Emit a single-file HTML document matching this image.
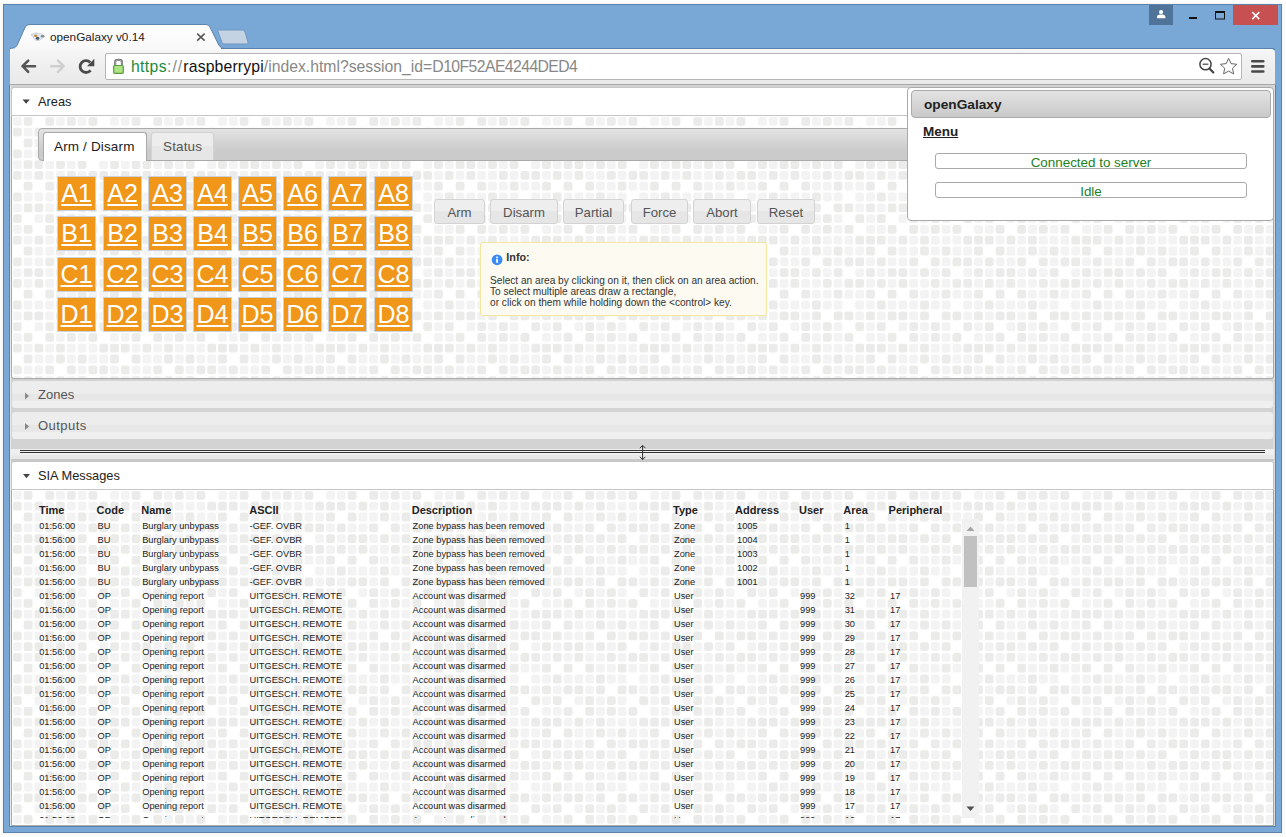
<!DOCTYPE html>
<html><head><meta charset="utf-8">
<style>
*{box-sizing:border-box}
html,body{margin:0;padding:0;width:1286px;height:837px;overflow:hidden;background:#fff;font-family:"Liberation Sans",sans-serif;position:relative}
.abs{position:absolute}
#win{position:absolute;left:3px;top:4px;width:1279px;height:829px;background:#79a7d6;border:1px solid #5b83ad;box-shadow:0 0 3px 1px rgba(60,50,40,0.07)}
#content{position:absolute;left:9px;top:85px;width:1267px;height:742px;background:#d3d3d3;border-left:1px solid #5b83ad;border-right:1px solid #5b83ad;border-bottom:1px solid #5b83ad}
.pat rect{width:8.8px;height:8.8px;rx:2.2px}
.pat .a{fill:#f3f3f3} .pat .b{fill:#ebebea}
.hdr{position:absolute;left:11px;width:1263px;border:1px solid #c5c5c5;border-radius:3px 3px 0 0;background:#fff;color:#222;font-size:12.8px}
.hdr .t{position:absolute;left:26px;top:6px}
.cnt{position:absolute;left:11px;width:1263px;border:1px solid #aaa;border-top:none;border-radius:0 0 3px 3px;background:#fff;overflow:hidden}
.cnt svg{position:absolute;left:0;top:0}
.ab{position:absolute;width:39px;height:35px;background:#f09618;border:1px solid #c9d3df;color:#fff;font-size:25px;text-align:center;line-height:33px;text-decoration:underline;text-decoration-thickness:2px;text-underline-offset:2px}
.btn{position:absolute;top:199px;height:25px;border:1px solid #d3d3d3;border-radius:3px;background:linear-gradient(#eeeeee 0,#eeeeee 50%,#e6e6e6 50%,#e6e6e6 100%);color:#555;font-size:13.2px;text-align:center;line-height:25px}
.th{position:absolute;top:0;font-size:11px;font-weight:bold;color:#222}
.td{position:absolute;font-size:9.25px;color:#222;white-space:nowrap;line-height:14px}
.coll{position:absolute;left:12px;width:1261px;height:27px;border-radius:3px;background:linear-gradient(#ededed 0,#ededed 47%,#e6e6e6 47%,#e8e8e8 73%,#efefef 73%);color:#555;font-size:13px}
</style></head><body>
<svg width="0" height="0" style="position:absolute"><defs><pattern id="pt" patternUnits="userSpaceOnUse" width="108" height="108" class="pat"><rect x="0.9" y="1" class="a"/><rect x="11.7" y="1" class="b"/><rect x="33.3" y="1" class="b"/><rect x="44.1" y="1" class="a"/><rect x="54.9" y="1" class="b"/><rect x="65.7" y="1" class="a"/><rect x="76.5" y="1" class="b"/><rect x="98.1" y="1" class="a"/><rect x="0.9" y="11.8" class="b"/><rect x="11.7" y="11.8" class="a"/><rect x="22.5" y="11.8" class="b"/><rect x="33.3" y="11.8" class="a"/><rect x="44.1" y="11.8" class="b"/><rect x="54.9" y="11.8" class="a"/><rect x="65.7" y="11.8" class="a"/><rect x="76.5" y="11.8" class="a"/><rect x="87.3" y="11.8" class="b"/><rect x="98.1" y="11.8" class="b"/><rect x="11.7" y="22.6" class="b"/><rect x="22.5" y="22.6" class="a"/><rect x="33.3" y="22.6" class="a"/><rect x="44.1" y="22.6" class="b"/><rect x="54.9" y="22.6" class="a"/><rect x="65.7" y="22.6" class="b"/><rect x="76.5" y="22.6" class="a"/><rect x="87.3" y="22.6" class="a"/><rect x="98.1" y="22.6" class="b"/><rect x="0.9" y="33.4" class="b"/><rect x="11.7" y="33.4" class="a"/><rect x="22.5" y="33.4" class="a"/><rect x="33.3" y="33.4" class="b"/><rect x="54.9" y="33.4" class="b"/><rect x="65.7" y="33.4" class="a"/><rect x="76.5" y="33.4" class="b"/><rect x="87.3" y="33.4" class="b"/><rect x="98.1" y="33.4" class="a"/><rect x="0.9" y="44.2" class="a"/><rect x="11.7" y="44.2" class="b"/><rect x="22.5" y="44.2" class="b"/><rect x="33.3" y="44.2" class="a"/><rect x="44.1" y="44.2" class="b"/><rect x="54.9" y="44.2" class="a"/><rect x="65.7" y="44.2" class="b"/><rect x="87.3" y="44.2" class="a"/><rect x="98.1" y="44.2" class="b"/><rect x="0.9" y="55" class="b"/><rect x="11.7" y="55" class="a"/><rect x="22.5" y="55" class="b"/><rect x="33.3" y="55" class="a"/><rect x="44.1" y="55" class="a"/><rect x="54.9" y="55" class="b"/><rect x="65.7" y="55" class="a"/><rect x="76.5" y="55" class="b"/><rect x="87.3" y="55" class="b"/><rect x="98.1" y="55" class="a"/><rect x="11.7" y="65.8" class="b"/><rect x="33.3" y="65.8" class="b"/><rect x="44.1" y="65.8" class="a"/><rect x="54.9" y="65.8" class="a"/><rect x="65.7" y="65.8" class="b"/><rect x="76.5" y="65.8" class="a"/><rect x="87.3" y="65.8" class="a"/><rect x="98.1" y="65.8" class="b"/><rect x="0.9" y="76.6" class="b"/><rect x="11.7" y="76.6" class="a"/><rect x="22.5" y="76.6" class="a"/><rect x="33.3" y="76.6" class="a"/><rect x="44.1" y="76.6" class="b"/><rect x="54.9" y="76.6" class="a"/><rect x="65.7" y="76.6" class="a"/><rect x="87.3" y="76.6" class="a"/><rect x="98.1" y="76.6" class="a"/><rect x="0.9" y="87.4" class="a"/><rect x="11.7" y="87.4" class="b"/><rect x="22.5" y="87.4" class="b"/><rect x="33.3" y="87.4" class="a"/><rect x="44.1" y="87.4" class="b"/><rect x="65.7" y="87.4" class="b"/><rect x="76.5" y="87.4" class="b"/><rect x="87.3" y="87.4" class="a"/><rect x="98.1" y="87.4" class="b"/><rect x="0.9" y="98.2" class="b"/><rect x="22.5" y="98.2" class="a"/><rect x="33.3" y="98.2" class="b"/><rect x="44.1" y="98.2" class="a"/><rect x="54.9" y="98.2" class="b"/><rect x="65.7" y="98.2" class="a"/><rect x="87.3" y="98.2" class="b"/><rect x="98.1" y="98.2" class="a"/></pattern></defs></svg>
<div id="win"></div>
<div class="abs" style="left:1149px;top:5px;width:24px;height:20px;background:#50739a"></div>
<div class="abs" style="left:1233px;top:5px;width:45px;height:20px;background:#c75050"></div>
<svg class="abs" style="left:0;top:0" width="300" height="60">
<defs><linearGradient id="tg" x1="0" y1="0" x2="0" y2="1"><stop offset="0" stop-color="#ffffff"/><stop offset="1" stop-color="#f8f8f8"/></linearGradient></defs>
<path d="M10,50 L10,48.5 Q15.5,48.5 17,45.5 L25.2,27 Q26.6,24.5 30,24.5 L206,24.5 Q208.8,24.5 210.2,27.5 L219,45.5 Q220.8,48.5 225,48.5 L225,50 Z" fill="url(#tg)" stroke="#5c84ad" stroke-width="1"/>
<path d="M218.5,30 L242.5,30 Q244,30 245,32 L248,42 Q248.5,44 246.5,44 L224,44 Q222.5,44 222,42.5 L218,31.5 Q217.7,30 218.5,30 Z" fill="#c3d3e3" stroke="#6f97c2" stroke-width="1"/>
</svg>
<div class="abs" style="left:50px;top:29.5px;font-size:11.75px;color:#222">openGalaxy v0.14</div>
<div class="abs" style="left:221px;top:48px;width:1054px;height:2px;background:#5c84ad;border-radius:0 5px 0 0"></div>
<div class="abs" style="left:10px;top:49px;width:1265px;height:36px;background:linear-gradient(#f8f8f8,#f4f4f4 10%,#e9e9e9);border-radius:0 4px 0 0;border-bottom:1px solid #a9a9a9"></div>
<div class="abs" style="left:105px;top:53px;width:1137px;height:27px;background:#fff;border:1px solid #b5b5b5;border-radius:2px"></div>
<div class="abs" style="left:131px;top:58px;font-size:15.75px;color:#888;white-space:nowrap"><span style="color:#1a8a40;letter-spacing:0.35px">https</span><span style="color:#888;letter-spacing:1.1px">://</span><span style="color:#111;letter-spacing:0.15px">raspberrypi</span><span>/index.html?session_id=</span><span style="letter-spacing:-0.57px">D10F52AE4244DED4</span></div>
<svg class="abs" style="left:0;top:0" width="1286" height="90">
<path d="M31,34.5 L36,32.8 L42,34.2 L44.5,36.2 L39.5,40.5 L35.5,40.2 Z" fill="#dde9f8" stroke="#b8bcc4" stroke-width="0.6"/>
<ellipse cx="35.7" cy="35.8" rx="1.6" ry="1.2" fill="#c98a20"/>
<ellipse cx="37.6" cy="38.3" rx="1.7" ry="1.5" fill="#4a5260"/>
<ellipse cx="42.6" cy="36.2" rx="1.8" ry="1.3" fill="#888"/>
<path d="M197.2,33.6 L204.6,40.6 M204.6,33.6 L197.2,40.6" stroke="#555" stroke-width="1.5"/>
<path d="M22.5,66.2 L35,66.2 M28.2,60.6 L22.6,66.2 L28.2,71.8" stroke="#555" stroke-width="2.6" fill="none" stroke-linecap="round" stroke-linejoin="round"/>
<path d="M51.3,66.2 L63.6,66.2 M58,60.6 L63.6,66.2 L58,71.8" stroke="#cfcfcf" stroke-width="2.6" fill="none" stroke-linecap="round" stroke-linejoin="round"/>
<path d="M90.6,70.3 A5.9,5.9 0 1 1 90.2,62.4" stroke="#4a4a4a" stroke-width="2.8" fill="none"/>
<path d="M94.3,58.8 L94.3,66.2 L87,66.2 Z" fill="#4a4a4a"/>
<path d="M115.2,65 L115.2,62 Q115.2,59.8 118.5,59.8 Q121.9,59.8 121.9,62 L121.9,65" stroke="#555" stroke-width="2" fill="none"/>
<path d="M115.2,65 L115.2,62 Q115.2,59.8 118.5,59.8 Q121.9,59.8 121.9,62 L121.9,65" stroke="#ddd" stroke-width="0.7" fill="none"/>
<rect x="113.7" y="65.5" width="9.6" height="7.8" rx="1" fill="#ace484" stroke="#5a9a44" stroke-width="1.2"/>
<circle cx="1205.5" cy="64.2" r="5.6" stroke="#444" stroke-width="1.5" fill="none"/>
<path d="M1202.6,64.2 L1208.4,64.2" stroke="#444" stroke-width="1.2"/>
<path d="M1209.5,68.5 L1213.3,72.4" stroke="#444" stroke-width="2.2" stroke-linecap="round"/>
<path d="M1228.6,58.3 L1231,63.6 L1236.8,64.3 L1232.5,68.2 L1233.6,73.9 L1228.6,71.1 L1223.6,73.9 L1224.7,68.2 L1220.4,64.3 L1226.2,63.6 Z" stroke="#666" stroke-width="1" fill="none" stroke-linejoin="round"/>
<path d="M1252.3,61.3 L1263.3,61.3 M1252.3,66.4 L1263.3,66.4 M1252.3,71.5 L1263.3,71.5" stroke="#4a4a4a" stroke-width="2.6" stroke-linecap="round"/>
<circle cx="1161.1" cy="12" r="2.1" fill="#fff"/>
<path d="M1157,18.3 L1157,16.6 Q1157,14.6 1159.5,14.4 L1162.7,14.4 Q1165.3,14.6 1165.3,16.6 L1165.3,18.3 Z" fill="#fff"/>
<rect x="1189" y="17" width="8" height="2" fill="#111"/>
<rect x="1215.5" y="11.5" width="9" height="7.5" stroke="#111" stroke-width="1" fill="none"/>
<rect x="1215" y="11" width="10" height="2" fill="#111"/>
<path d="M1252.3,12.1 L1259.3,19.1 M1259.3,12.1 L1252.3,19.1" stroke="#fff" stroke-width="1.5"/>
</svg>
<div id="content"></div>
<div class="abs" style="left:10px;top:85px;width:1px;height:741px;background:#e9e9e9"></div>
<div class="abs" style="left:1273px;top:85px;width:2px;height:741px;background:#dcdcdc"></div>
<div class="hdr" style="top:87px;height:29px"><div class="t" style="left:26px">Areas</div></div>
<div class="cnt" style="top:116px;height:263px"><svg width="1263" height="263"><rect width="1263" height="263" fill="url(#pt)"/></svg>
  <div class="abs" style="left:26px;top:12px;width:1241px;height:33px;border:1px solid #aaa;border-radius:4px;background:linear-gradient(#e3e3e3,#cbcbcb 70%,#cbcbcb)"></div>
  <div class="abs" style="left:31px;top:16px;width:104px;height:29px;border:1px solid #aaa;border-bottom:none;border-radius:3px 3px 0 0;background:#fff;color:#222;font-size:13.5px;letter-spacing:0.15px;padding:6px 0 0 10px">Arm / Disarm</div>
  <div class="abs" style="left:139px;top:16px;width:63px;height:28px;border:1px solid #d3d3d3;border-bottom:none;border-radius:3px 3px 0 0;background:linear-gradient(#ededed 0,#ededed 50%,#e6e6e6 50%);color:#555;font-size:13.5px;letter-spacing:0.15px;padding:6px 0 0 11px">Status</div>
</div>
<div class="abs" style="left:0;top:0;width:1286px;height:837px"><div class="ab" style="left:57px;top:176px">A1</div><div class="ab" style="left:103px;top:176px">A2</div><div class="ab" style="left:148px;top:176px">A3</div><div class="ab" style="left:193px;top:176px">A4</div><div class="ab" style="left:238px;top:176px">A5</div><div class="ab" style="left:283px;top:176px">A6</div><div class="ab" style="left:328px;top:176px">A7</div><div class="ab" style="left:374px;top:176px">A8</div><div class="ab" style="left:57px;top:216px">B1</div><div class="ab" style="left:103px;top:216px">B2</div><div class="ab" style="left:148px;top:216px">B3</div><div class="ab" style="left:193px;top:216px">B4</div><div class="ab" style="left:238px;top:216px">B5</div><div class="ab" style="left:283px;top:216px">B6</div><div class="ab" style="left:328px;top:216px">B7</div><div class="ab" style="left:374px;top:216px">B8</div><div class="ab" style="left:57px;top:257px">C1</div><div class="ab" style="left:103px;top:257px">C2</div><div class="ab" style="left:148px;top:257px">C3</div><div class="ab" style="left:193px;top:257px">C4</div><div class="ab" style="left:238px;top:257px">C5</div><div class="ab" style="left:283px;top:257px">C6</div><div class="ab" style="left:328px;top:257px">C7</div><div class="ab" style="left:374px;top:257px">C8</div><div class="ab" style="left:57px;top:297px">D1</div><div class="ab" style="left:103px;top:297px">D2</div><div class="ab" style="left:148px;top:297px">D3</div><div class="ab" style="left:193px;top:297px">D4</div><div class="ab" style="left:238px;top:297px">D5</div><div class="ab" style="left:283px;top:297px">D6</div><div class="ab" style="left:328px;top:297px">D7</div><div class="ab" style="left:374px;top:297px">D8</div><div class="btn" style="left:434px;width:51px">Arm</div><div class="btn" style="left:490px;width:68px">Disarm</div><div class="btn" style="left:563px;width:61px">Partial</div><div class="btn" style="left:631px;width:57px">Force</div><div class="btn" style="left:693px;width:58px">Abort</div><div class="btn" style="left:757px;width:58px">Reset</div></div>
<div class="abs" style="left:480px;top:242px;width:287px;height:74px;border:1px solid #f3e6a0;border-radius:3px;background:#fcfaf1;color:#333">
  <svg class="abs" style="left:0;top:0" width="30" height="30"><circle cx="16.1" cy="16.8" r="5.4" fill="#3b8bf5"/><rect x="15.2" y="13.6" width="1.8" height="1.6" fill="#fff"/><rect x="15.2" y="16" width="1.8" height="3.8" fill="#fff"/></svg>
  <div class="abs" style="left:25.3px;top:8px;font-size:10.8px;font-weight:bold">Info:</div>
  <div class="abs" style="left:9px;top:32px;font-size:10.15px;line-height:11px;white-space:nowrap">Select an area by clicking on it, then click on an area action.<br>To select multiple areas draw a rectangle,<br>or click on them while holding down the &lt;control&gt; key.</div>
</div>
<div class="coll" style="top:381px"><div class="abs" style="left:26px;top:6px">Zones</div></div>
<div class="coll" style="top:412px"><div class="abs" style="left:26px;top:6px;letter-spacing:0.45px">Outputs</div></div>
<div class="abs" style="left:11px;top:449px;width:1263px;height:12px;background:linear-gradient(#efefef 0,#efefef 50%,#e8e8e8 50%,#e8e8e8 83%,#c8c8c8 83%)"></div>
<div class="abs" style="left:20px;top:450px;width:1245px;height:3px;border-top:1px solid #333;border-bottom:1px solid #333"></div>
<div class="hdr" style="top:461px;height:29px"><div class="t">SIA Messages</div></div>
<div class="cnt" style="top:490px;height:336px;border-radius:0"><svg width="1263" height="336"><rect width="1263" height="336" fill="url(#pt)"/></svg></div>
<div class="abs" style="left:0;top:504px"><div class="th" style="left:39px">Time</div><div class="th" style="left:96.5px">Code</div><div class="th" style="left:141.3px">Name</div><div class="th" style="left:249.2px">ASCII</div><div class="th" style="left:411.7px">Description</div><div class="th" style="left:673px">Type</div><div class="th" style="left:735px">Address</div><div class="th" style="left:799px">User</div><div class="th" style="left:843.3px">Area</div><div class="th" style="left:888.6px">Peripheral</div></div>
<div class="abs" style="left:20px;top:519px;width:959px;height:299px;overflow:hidden"><div class="td" style="left:19.200000000000003px;top:0px">01:56:00</div><div class="td" style="left:77.5px;top:0px">BU</div><div class="td" style="left:122.19999999999999px;top:0px">Burglary unbypass</div><div class="td" style="left:229.6px;top:0px">-GEF. OVBR</div><div class="td" style="left:392.6px;top:0px">Zone bypass has been removed</div><div class="td" style="left:654px;top:0px">Zone</div><div class="td" style="left:717px;top:0px">1005</div><div class="td" style="left:824.7px;top:0px">1</div><div class="td" style="left:19.200000000000003px;top:14px">01:56:00</div><div class="td" style="left:77.5px;top:14px">BU</div><div class="td" style="left:122.19999999999999px;top:14px">Burglary unbypass</div><div class="td" style="left:229.6px;top:14px">-GEF. OVBR</div><div class="td" style="left:392.6px;top:14px">Zone bypass has been removed</div><div class="td" style="left:654px;top:14px">Zone</div><div class="td" style="left:717px;top:14px">1004</div><div class="td" style="left:824.7px;top:14px">1</div><div class="td" style="left:19.200000000000003px;top:28px">01:56:00</div><div class="td" style="left:77.5px;top:28px">BU</div><div class="td" style="left:122.19999999999999px;top:28px">Burglary unbypass</div><div class="td" style="left:229.6px;top:28px">-GEF. OVBR</div><div class="td" style="left:392.6px;top:28px">Zone bypass has been removed</div><div class="td" style="left:654px;top:28px">Zone</div><div class="td" style="left:717px;top:28px">1003</div><div class="td" style="left:824.7px;top:28px">1</div><div class="td" style="left:19.200000000000003px;top:42px">01:56:00</div><div class="td" style="left:77.5px;top:42px">BU</div><div class="td" style="left:122.19999999999999px;top:42px">Burglary unbypass</div><div class="td" style="left:229.6px;top:42px">-GEF. OVBR</div><div class="td" style="left:392.6px;top:42px">Zone bypass has been removed</div><div class="td" style="left:654px;top:42px">Zone</div><div class="td" style="left:717px;top:42px">1002</div><div class="td" style="left:824.7px;top:42px">1</div><div class="td" style="left:19.200000000000003px;top:56px">01:56:00</div><div class="td" style="left:77.5px;top:56px">BU</div><div class="td" style="left:122.19999999999999px;top:56px">Burglary unbypass</div><div class="td" style="left:229.6px;top:56px">-GEF. OVBR</div><div class="td" style="left:392.6px;top:56px">Zone bypass has been removed</div><div class="td" style="left:654px;top:56px">Zone</div><div class="td" style="left:717px;top:56px">1001</div><div class="td" style="left:824.7px;top:56px">1</div><div class="td" style="left:19.200000000000003px;top:70px">01:56:00</div><div class="td" style="left:77.5px;top:70px">OP</div><div class="td" style="left:122.19999999999999px;top:70px">Opening report</div><div class="td" style="left:229.6px;top:70px">UITGESCH. REMOTE</div><div class="td" style="left:392.6px;top:70px">Account was disarmed</div><div class="td" style="left:654px;top:70px">User</div><div class="td" style="left:780px;top:70px">999</div><div class="td" style="left:824.7px;top:70px">32</div><div class="td" style="left:870px;top:70px">17</div><div class="td" style="left:19.200000000000003px;top:84px">01:56:00</div><div class="td" style="left:77.5px;top:84px">OP</div><div class="td" style="left:122.19999999999999px;top:84px">Opening report</div><div class="td" style="left:229.6px;top:84px">UITGESCH. REMOTE</div><div class="td" style="left:392.6px;top:84px">Account was disarmed</div><div class="td" style="left:654px;top:84px">User</div><div class="td" style="left:780px;top:84px">999</div><div class="td" style="left:824.7px;top:84px">31</div><div class="td" style="left:870px;top:84px">17</div><div class="td" style="left:19.200000000000003px;top:98px">01:56:00</div><div class="td" style="left:77.5px;top:98px">OP</div><div class="td" style="left:122.19999999999999px;top:98px">Opening report</div><div class="td" style="left:229.6px;top:98px">UITGESCH. REMOTE</div><div class="td" style="left:392.6px;top:98px">Account was disarmed</div><div class="td" style="left:654px;top:98px">User</div><div class="td" style="left:780px;top:98px">999</div><div class="td" style="left:824.7px;top:98px">30</div><div class="td" style="left:870px;top:98px">17</div><div class="td" style="left:19.200000000000003px;top:112px">01:56:00</div><div class="td" style="left:77.5px;top:112px">OP</div><div class="td" style="left:122.19999999999999px;top:112px">Opening report</div><div class="td" style="left:229.6px;top:112px">UITGESCH. REMOTE</div><div class="td" style="left:392.6px;top:112px">Account was disarmed</div><div class="td" style="left:654px;top:112px">User</div><div class="td" style="left:780px;top:112px">999</div><div class="td" style="left:824.7px;top:112px">29</div><div class="td" style="left:870px;top:112px">17</div><div class="td" style="left:19.200000000000003px;top:126px">01:56:00</div><div class="td" style="left:77.5px;top:126px">OP</div><div class="td" style="left:122.19999999999999px;top:126px">Opening report</div><div class="td" style="left:229.6px;top:126px">UITGESCH. REMOTE</div><div class="td" style="left:392.6px;top:126px">Account was disarmed</div><div class="td" style="left:654px;top:126px">User</div><div class="td" style="left:780px;top:126px">999</div><div class="td" style="left:824.7px;top:126px">28</div><div class="td" style="left:870px;top:126px">17</div><div class="td" style="left:19.200000000000003px;top:140px">01:56:00</div><div class="td" style="left:77.5px;top:140px">OP</div><div class="td" style="left:122.19999999999999px;top:140px">Opening report</div><div class="td" style="left:229.6px;top:140px">UITGESCH. REMOTE</div><div class="td" style="left:392.6px;top:140px">Account was disarmed</div><div class="td" style="left:654px;top:140px">User</div><div class="td" style="left:780px;top:140px">999</div><div class="td" style="left:824.7px;top:140px">27</div><div class="td" style="left:870px;top:140px">17</div><div class="td" style="left:19.200000000000003px;top:154px">01:56:00</div><div class="td" style="left:77.5px;top:154px">OP</div><div class="td" style="left:122.19999999999999px;top:154px">Opening report</div><div class="td" style="left:229.6px;top:154px">UITGESCH. REMOTE</div><div class="td" style="left:392.6px;top:154px">Account was disarmed</div><div class="td" style="left:654px;top:154px">User</div><div class="td" style="left:780px;top:154px">999</div><div class="td" style="left:824.7px;top:154px">26</div><div class="td" style="left:870px;top:154px">17</div><div class="td" style="left:19.200000000000003px;top:168px">01:56:00</div><div class="td" style="left:77.5px;top:168px">OP</div><div class="td" style="left:122.19999999999999px;top:168px">Opening report</div><div class="td" style="left:229.6px;top:168px">UITGESCH. REMOTE</div><div class="td" style="left:392.6px;top:168px">Account was disarmed</div><div class="td" style="left:654px;top:168px">User</div><div class="td" style="left:780px;top:168px">999</div><div class="td" style="left:824.7px;top:168px">25</div><div class="td" style="left:870px;top:168px">17</div><div class="td" style="left:19.200000000000003px;top:182px">01:56:00</div><div class="td" style="left:77.5px;top:182px">OP</div><div class="td" style="left:122.19999999999999px;top:182px">Opening report</div><div class="td" style="left:229.6px;top:182px">UITGESCH. REMOTE</div><div class="td" style="left:392.6px;top:182px">Account was disarmed</div><div class="td" style="left:654px;top:182px">User</div><div class="td" style="left:780px;top:182px">999</div><div class="td" style="left:824.7px;top:182px">24</div><div class="td" style="left:870px;top:182px">17</div><div class="td" style="left:19.200000000000003px;top:196px">01:56:00</div><div class="td" style="left:77.5px;top:196px">OP</div><div class="td" style="left:122.19999999999999px;top:196px">Opening report</div><div class="td" style="left:229.6px;top:196px">UITGESCH. REMOTE</div><div class="td" style="left:392.6px;top:196px">Account was disarmed</div><div class="td" style="left:654px;top:196px">User</div><div class="td" style="left:780px;top:196px">999</div><div class="td" style="left:824.7px;top:196px">23</div><div class="td" style="left:870px;top:196px">17</div><div class="td" style="left:19.200000000000003px;top:210px">01:56:00</div><div class="td" style="left:77.5px;top:210px">OP</div><div class="td" style="left:122.19999999999999px;top:210px">Opening report</div><div class="td" style="left:229.6px;top:210px">UITGESCH. REMOTE</div><div class="td" style="left:392.6px;top:210px">Account was disarmed</div><div class="td" style="left:654px;top:210px">User</div><div class="td" style="left:780px;top:210px">999</div><div class="td" style="left:824.7px;top:210px">22</div><div class="td" style="left:870px;top:210px">17</div><div class="td" style="left:19.200000000000003px;top:224px">01:56:00</div><div class="td" style="left:77.5px;top:224px">OP</div><div class="td" style="left:122.19999999999999px;top:224px">Opening report</div><div class="td" style="left:229.6px;top:224px">UITGESCH. REMOTE</div><div class="td" style="left:392.6px;top:224px">Account was disarmed</div><div class="td" style="left:654px;top:224px">User</div><div class="td" style="left:780px;top:224px">999</div><div class="td" style="left:824.7px;top:224px">21</div><div class="td" style="left:870px;top:224px">17</div><div class="td" style="left:19.200000000000003px;top:238px">01:56:00</div><div class="td" style="left:77.5px;top:238px">OP</div><div class="td" style="left:122.19999999999999px;top:238px">Opening report</div><div class="td" style="left:229.6px;top:238px">UITGESCH. REMOTE</div><div class="td" style="left:392.6px;top:238px">Account was disarmed</div><div class="td" style="left:654px;top:238px">User</div><div class="td" style="left:780px;top:238px">999</div><div class="td" style="left:824.7px;top:238px">20</div><div class="td" style="left:870px;top:238px">17</div><div class="td" style="left:19.200000000000003px;top:252px">01:56:00</div><div class="td" style="left:77.5px;top:252px">OP</div><div class="td" style="left:122.19999999999999px;top:252px">Opening report</div><div class="td" style="left:229.6px;top:252px">UITGESCH. REMOTE</div><div class="td" style="left:392.6px;top:252px">Account was disarmed</div><div class="td" style="left:654px;top:252px">User</div><div class="td" style="left:780px;top:252px">999</div><div class="td" style="left:824.7px;top:252px">19</div><div class="td" style="left:870px;top:252px">17</div><div class="td" style="left:19.200000000000003px;top:266px">01:56:00</div><div class="td" style="left:77.5px;top:266px">OP</div><div class="td" style="left:122.19999999999999px;top:266px">Opening report</div><div class="td" style="left:229.6px;top:266px">UITGESCH. REMOTE</div><div class="td" style="left:392.6px;top:266px">Account was disarmed</div><div class="td" style="left:654px;top:266px">User</div><div class="td" style="left:780px;top:266px">999</div><div class="td" style="left:824.7px;top:266px">18</div><div class="td" style="left:870px;top:266px">17</div><div class="td" style="left:19.200000000000003px;top:280px">01:56:00</div><div class="td" style="left:77.5px;top:280px">OP</div><div class="td" style="left:122.19999999999999px;top:280px">Opening report</div><div class="td" style="left:229.6px;top:280px">UITGESCH. REMOTE</div><div class="td" style="left:392.6px;top:280px">Account was disarmed</div><div class="td" style="left:654px;top:280px">User</div><div class="td" style="left:780px;top:280px">999</div><div class="td" style="left:824.7px;top:280px">17</div><div class="td" style="left:870px;top:280px">17</div><div class="td" style="left:19.200000000000003px;top:294px">01:56:00</div><div class="td" style="left:77.5px;top:294px">OP</div><div class="td" style="left:122.19999999999999px;top:294px">Opening report</div><div class="td" style="left:229.6px;top:294px">UITGESCH. REMOTE</div><div class="td" style="left:392.6px;top:294px">Account was disarmed</div><div class="td" style="left:654px;top:294px">User</div><div class="td" style="left:780px;top:294px">999</div><div class="td" style="left:824.7px;top:294px">16</div><div class="td" style="left:870px;top:294px">17</div>
  <div class="abs" style="left:942px;top:0;width:17px;height:299px;background:#f1f1f1"><div class="abs" style="left:2px;top:17px;width:13px;height:51px;background:#c1c1c1"></div></div>
</div>
<svg class="abs" style="left:0;top:0;pointer-events:none" width="1286" height="837">
<path d="M22.5,99.5 L29.8,99.5 L26.15,103.8 Z" fill="#454545"/>
<path d="M23,474 L30,474 L26.5,478.2 Z" fill="#454545"/>
<path d="M25,392.5 L29,396 L25,399.5 Z" fill="#888"/>
<path d="M25,423 L29,426.5 L25,430 Z" fill="#888"/>
<path d="M642.6,445.5 L642.6,459.5 M639.8,448.2 L642.6,445.4 L645.4,448.2 M639.8,456.8 L642.6,459.6 L645.4,456.8" stroke="#333" stroke-width="1" fill="none"/>
<path d="M966.5,531 L974.5,531 L970.5,526.5 Z" fill="#a3a3a3"/>
<path d="M966.5,806.5 L974.5,806.5 L970.5,811 Z" fill="#505050"/>
</svg>
<div class="abs" style="left:907px;top:87px;width:367px;height:134px;background:#fff;border:1px solid #aaa;border-radius:4px">
  <div class="abs" style="left:3px;top:2px;width:360px;height:28px;border:1px solid #aaa;border-radius:4px;background:linear-gradient(#e3e3e3,#c9c9c9);font-weight:bold;font-size:13.7px;color:#222;padding:6px 0 0 12px">openGalaxy</div>
  <div class="abs" style="left:15px;top:36px;font-weight:bold;font-size:13.5px;color:#222;text-decoration:underline">Menu</div>
  <div class="abs" style="left:27px;top:65px;width:312px;height:16px;border:1px solid #aaa;border-radius:3px;color:#238023;font-size:13.4px;text-align:center;line-height:15px;padding-top:1px">Connected to server</div>
  <div class="abs" style="left:27px;top:94px;width:312px;height:16px;border:1px solid #aaa;border-radius:3px;color:#238023;font-size:13.4px;text-align:center;line-height:15px;padding-top:1px">Idle</div>
</div>
</body></html>
